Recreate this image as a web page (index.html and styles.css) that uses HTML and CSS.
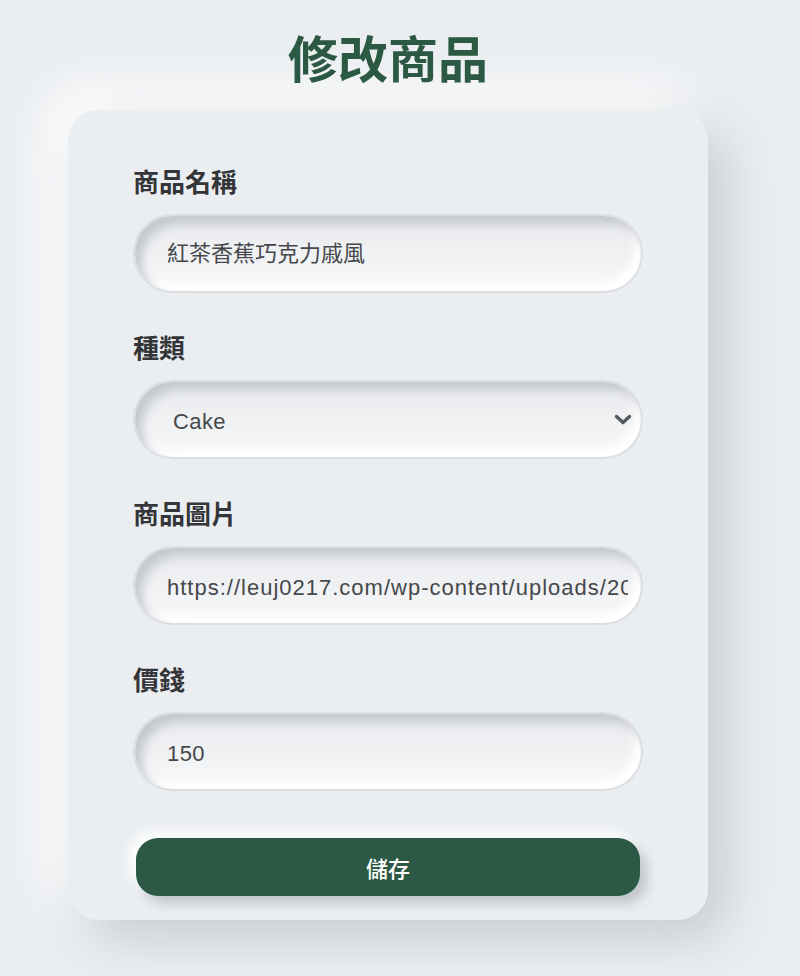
FILE: index.html
```html
<!DOCTYPE html>
<html lang="zh-Hant">
<head>
<meta charset="utf-8">
<title>修改商品</title>
<link rel="stylesheet" href="styles.css">
</head>
<body>
<main class="page">
  <h1 class="title">修改商品</h1>
  <form class="card">
    <div class="field">
      <label class="label" for="name">商品名稱</label>
      <input class="input input-cjk" id="name" type="text" value="紅茶香蕉巧克力戚風">
    </div>
    <div class="field">
      <label class="label" for="type">種類</label>
      <div class="select-wrap">
        <select class="input input-latin select" id="type">
          <option>Cake</option>
          <option>Cookie</option>
          <option>Bread</option>
        </select>
        <svg class="chevron" width="18" height="12" viewBox="0 0 18 12" aria-hidden="true"><path d="M2.5 2.5 L9 8.5 L15.5 2.5" fill="none" stroke="#555a60" stroke-width="3.4" stroke-linecap="round" stroke-linejoin="round"/></svg>
      </div>
    </div>
    <div class="field">
      <label class="label" for="img">商品圖片</label>
      <input class="input input-latin input-url" id="img" type="text" value="https://leuj0217.com/wp-content/uploads/2023/05/cake.jpg">
    </div>
    <div class="field">
      <label class="label" for="price">價錢</label>
      <input class="input input-latin" id="price" type="text" value="150">
    </div>
    <button class="save" type="button">儲存</button>
  </form>
</main>
</body>
</html>
```
FILE: styles.css
```css
* { box-sizing: border-box; }

html, body {
  margin: 0;
  background: #ebeef1;
}

body {
  font-family: "Liberation Sans", "Noto Sans CJK TC", sans-serif;
  padding: 0 24px 0 0;
  min-height: 976px;
}

.page {
  width: 640px;
  margin: 0 auto;
  padding-top: 19px;
}

.title {
  margin: 0 0 17px;
  text-align: center;
  font-family: "Noto Sans CJK TC", sans-serif;
  font-size: 50px;
  line-height: 74px;
  font-weight: 700;
  color: #2c5944;
}

.card {
  display: flex;
  flex-direction: column;
  background: #ebeef1;
  border-radius: 30px;
  padding: 52px 65px 24px;
  box-shadow: 20px 20px 50px #c9ccd1, -20px -20px 50px #ffffff;
}

.field {
  display: flex;
  flex-direction: column;
  margin-bottom: 35px;
}

.field:last-of-type { margin-bottom: 0; }

.label {
  font-family: "Noto Sans CJK TC", sans-serif;
  font-size: 26px;
  line-height: 38px;
  font-weight: 700;
  color: #343538;
  margin-bottom: 14px;
}

.input {
  width: 100%;
  height: 79px;
  border: 2px solid #dcdee2;
  border-radius: 40px;
  padding: 0 13px 0 32px;
  font-family: "Liberation Sans", "Noto Sans CJK TC", sans-serif;
  font-size: 22px;
  color: #45474b;
  background: linear-gradient(180deg, #e8eaed 0%, #eff1f3 50%, #f8f9fa 100%);
  box-shadow: inset 7px 8px 10px #c6c9ce, inset -6px -7px 10px #ffffff;
  outline: none;
}

.input-cjk {
  padding-bottom: 5px;
}

.input-latin {
  padding-top: 4px;
  letter-spacing: 0.4px;
}

.input-url {
  letter-spacing: 1px;
}

.select-wrap {
  position: relative;
}

.select {
  appearance: none;
  -webkit-appearance: none;
  padding-left: 38px;
}

.chevron {
  position: absolute;
  right: 11px;
  top: 34px;
  pointer-events: none;
}

.save {
  margin: 47px 3px 0;
  height: 58px;
  border: none;
  border-radius: 22px;
  background: #2c5945;
  color: #ffffff;
  font-family: "Noto Sans CJK TC", sans-serif;
  font-size: 22px;
  font-weight: 500;
  box-shadow: 7px 8px 12px #c2c5ca, -6px -6px 12px #ffffff;
  cursor: pointer;
}
```
